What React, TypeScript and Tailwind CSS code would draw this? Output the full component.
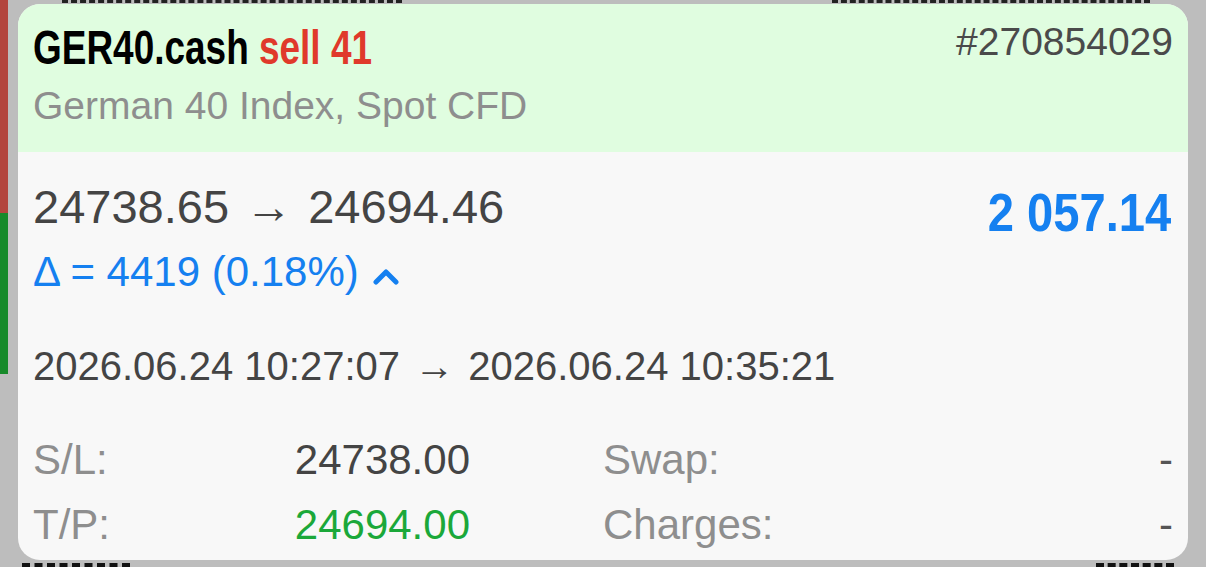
export default function App() {
  return (
    <div className="w-[1206px] h-[567px] bg-[#bdbdbd] flex overflow-hidden relative" style={{ fontFamily: '"Liberation Sans", Arial, sans-serif' }}>
      {/* side strip */}
      <div className="w-[8px] flex flex-col">
        <div className="h-[213px] bg-[#b3453d]" />
        <div className="h-[161px] bg-[#178a2a]" />
      </div>

      {/* list rows peeking behind the card */}
      <div className="absolute left-[62px] top-0 w-[340px] border-t-[3px] border-dashed border-[#222]" />
      <div className="absolute left-[832px] top-0 w-[318px] border-t-[3px] border-dashed border-[#222]" />
      <div className="absolute left-[22px] top-[563px] w-[108px] border-t-[4px] border-dashed border-[#111]" />
      <div className="absolute left-[1096px] top-[563px] w-[78px] border-t-[4px] border-dashed border-[#111]" />

      {/* trade card */}
      <div className="relative ml-[10px] mt-[4px] w-[1170px] h-[556px] rounded-[22px] bg-[#f8f8f8] overflow-hidden flex flex-col">
        <div className="h-[148px] shrink-0 bg-[#e0fde0] px-[15px] pt-[16px] flex justify-between">
          <div className="flex flex-col">
            <div className="h-[56px]">
              <div className="inline-block origin-left scale-x-[0.77] whitespace-nowrap text-[48px] leading-[56px] font-bold">
                <span className="text-black">GER40.cash</span> <span className="text-[#e0392b]">sell 41</span>
              </div>
            </div>
            <div className="text-[39px] leading-[44px] mt-[8px] text-[#8e8e8e]">German 40 Index, Spot CFD</div>
          </div>
          <div className="text-[39px] leading-[44px] text-[#4a4a4a]">#270854029</div>
        </div>

        <div className="pl-[15px] pr-[17px] pt-[29px] flex justify-between">
          <div className="flex flex-col">
            <div className="text-[47px] leading-[52px] text-[#444444] whitespace-nowrap">
              24738.65 <span className="mx-[3px]">→</span> 24694.46
            </div>
            <div className="text-[42px] leading-[48px] mt-[15px] text-[#1580f0] flex items-center gap-[14px]">
              <span>Δ = 4419 (0.18%)</span>
              <svg width="26" height="18" viewBox="0 0 26 18" className="translate-y-[4px]">
                <polyline points="3,15 13,5 23,15" fill="none" stroke="#1580f0" strokeWidth="5" strokeLinecap="round" strokeLinejoin="round" />
              </svg>
            </div>
          </div>
          <div className="mt-[2px] h-[60px]">
            <div className="inline-block origin-right scale-x-[0.89] whitespace-nowrap text-[53px] leading-[60px] font-bold text-[#1580f0]">2 057.14</div>
          </div>
        </div>

        <div className="px-[15px] mt-[46px] text-[40px] leading-[48px] text-[#444444] whitespace-nowrap">
          2026.06.24 10:27:07 <span className="mx-[3px]">→</span> 2026.06.24 10:35:21
        </div>

        <div className="px-[15px] mt-[46px] grid grid-cols-[437px_1fr_1fr] gap-y-[17px] text-[42px] leading-[48px]">
          <div className="flex justify-between">
            <span className="text-[#8e8e8e]">S/L:</span>
            <span className="text-[#444444]">24738.00</span>
          </div>
          <div className="pl-[133px] text-[#8e8e8e]">Swap:</div>
          <div className="text-right text-[#555555]">-</div>
          <div className="flex justify-between">
            <span className="text-[#8e8e8e]">T/P:</span>
            <span className="text-[#1ba83a]">24694.00</span>
          </div>
          <div className="pl-[133px] text-[#8e8e8e]">Charges:</div>
          <div className="text-right text-[#555555]">-</div>
        </div>
      </div>
    </div>
  );
}
